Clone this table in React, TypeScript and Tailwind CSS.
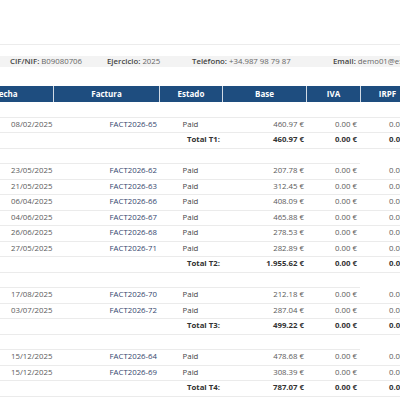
import React from 'react';

interface Invoice {
  fecha: string;
  factura: string;
  base: string;
}

interface Quarter {
  label: string;
  total: string;
  invoices: Invoice[];
}

const quarters: Quarter[] = [
  {
    label: 'T1',
    total: '460.97 €',
    invoices: [{ fecha: '08/02/2025', factura: 'FACT2026-65', base: '460.97 €' }],
  },
  {
    label: 'T2',
    total: '1.955.62 €',
    invoices: [
      { fecha: '23/05/2025', factura: 'FACT2026-62', base: '207.78 €' },
      { fecha: '21/05/2025', factura: 'FACT2026-63', base: '312.45 €' },
      { fecha: '06/04/2025', factura: 'FACT2026-66', base: '408.09 €' },
      { fecha: '04/06/2025', factura: 'FACT2026-67', base: '465.88 €' },
      { fecha: '26/06/2025', factura: 'FACT2026-68', base: '278.53 €' },
      { fecha: '27/05/2025', factura: 'FACT2026-71', base: '282.89 €' },
    ],
  },
  {
    label: 'T3',
    total: '499.22 €',
    invoices: [
      { fecha: '17/08/2025', factura: 'FACT2026-70', base: '212.18 €' },
      { fecha: '03/07/2025', factura: 'FACT2026-72', base: '287.04 €' },
    ],
  },
  {
    label: 'T4',
    total: '787.07 €',
    invoices: [
      { fecha: '15/12/2025', factura: 'FACT2026-64', base: '478.68 €' },
      { fecha: '15/12/2025', factura: 'FACT2026-69', base: '308.39 €' },
    ],
  },
];

const cols = 'grid grid-cols-[94px_106px_63px_84px_54px_54px_60px]';

const InfoItem: React.FC<{ label: string; value: string; width: string }> = ({ label, value, width }) => (
  <div className={`${width} shrink-0 whitespace-nowrap`}>
    <span className="font-semibold text-[#444]">{label}</span>{' '}
    <span className="text-[#666]">{value}</span>
  </div>
);

const App: React.FC = () => {
  return (
    <div className="w-[400px] h-[400px] overflow-hidden bg-white font-['Open_Sans',sans-serif] text-[7.8px]">
      <div className="h-[45px] border-b border-[#ececec]" />
      <div className="mt-[11px] h-[11px] bg-[#f3f3f3] flex items-center pl-[10px]">
        <InfoItem label="CIF/NIF:" value="B09080706" width="w-[97px]" />
        <InfoItem label="Ejercicio:" value="2025" width="w-[85px]" />
        <InfoItem label="Teléfono:" value="+34.987 98 79 87" width="w-[141px]" />
        <InfoItem label="Email:" value="demo01@example.com" width="w-[200px]" />
      </div>

      <div className="mt-[19px] -ml-[41px] w-[520px]">
        <div className={`${cols} h-[16px] bg-[#1e4d7f] text-white font-bold text-[8px]`}>
          {['Fecha', 'Factura', 'Estado', 'Base', 'IVA', 'IRPF', 'Total'].map((h, i) => (
            <div key={h} className={`flex items-center justify-center ${i > 0 ? 'border-l border-white/80' : ''}`}>
              {h}
            </div>
          ))}
        </div>

        {quarters.map((q, qi) => (
          <div key={q.label}>
            <div className={`h-[15.5px] ${qi === 0 ? 'border-b border-[#ebebeb]' : ''}`}>
              {qi > 0 && <div className="h-full w-[401px] border-b border-[#ebebeb]" />}
            </div>
            {q.invoices.map((inv) => (
              <div key={inv.factura} className={`${cols} h-[15.5px] items-center border-b border-[#ebebeb] text-[#5a5a5a]`}>
                <div className="pl-[52px]">{inv.fecha}</div>
                <div className="text-right pr-[2px] text-[#34466e]">{inv.factura}</div>
                <div className="text-center text-[#444]">Paid</div>
                <div className="text-right pr-[2px]">{inv.base}</div>
                <div className="text-right pr-[3px]">0.00 €</div>
                <div className="pl-[29px] whitespace-nowrap">0.00 €</div>
                <div />
              </div>
            ))}
            <div className={`${cols} h-[15.5px] items-center border-b border-[#ebebeb] font-bold text-[#333]`}>
              <div className="col-span-3 text-right pr-[2px]">Total {q.label}:</div>
              <div className="text-right pr-[2px]">{q.total}</div>
              <div className="text-right pr-[3px]">0.00 €</div>
              <div className="pl-[29px] whitespace-nowrap">0.00 €</div>
              <div />
            </div>
          </div>
        ))}
      </div>
    </div>
  );
};

export default App;
